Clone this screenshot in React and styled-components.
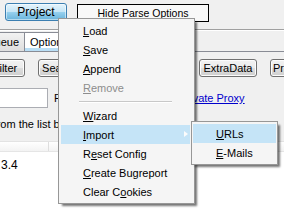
import React from 'react'
import styled, { createGlobalStyle } from 'styled-components'

const GlobalStyle = createGlobalStyle`
	html, body {
		margin: 0;
		padding: 0;
		background: #f0f0f0;
		overflow: hidden;
	}
	body {
		font-family: "Liberation Sans", Arial, sans-serif;
		font-size: 11px;
		color: #000;
	}
`

const Window = styled.div`
	position: relative;
	width: 284px;
	height: 210px;
	overflow: hidden;
	background: #f0f0f0;
`

const TopBar = styled.div`
	display: flex;
	align-items: flex-start;
	gap: 10px;
	height: 26px;
	padding: 3px 0 0 5px;
	border-bottom: 1px solid #a0a0a0;
	box-shadow: 0 1px 0 #fff;
`

const ProjectButton = styled.div`
	box-sizing: border-box;
	width: 62px;
	height: 18px;
	display: flex;
	align-items: center;
	justify-content: center;
	border: 1px solid #3c7fb1;
	border-radius: 3px;
	background: linear-gradient(#e5f4fc 0%, #c4e5f6 50%, #98d1ef 50%, #68b3db 100%);
	box-shadow: inset 0 0 0 1px rgba(255, 255, 255, 0.5);
	font-size: 12px;
`

const ToggleButton = styled.div`
	box-sizing: border-box;
	width: 132px;
	height: 18px;
	margin-top: 1px;
	display: flex;
	align-items: center;
	justify-content: center;
	border: 1px solid #000;
	background: #f8f8f8;
	font-size: 10.5px;
`

const TabStrip = styled.div`
	display: flex;
	height: 19px;
	margin-top: 2px;
	margin-left: -20px;
	border-bottom: 1px solid #898c95;
`

const Tab = styled.div`
	box-sizing: border-box;
	height: 19px;
	padding: 3px 5px 0;
	border: 1px solid #898c95;
	border-bottom: none;
	margin-right: -1px;
	background: ${p => (p.$active ? '#fff' : 'linear-gradient(#f2f2f2, #dedede)')};
	box-shadow: ${p => (p.$active ? 'inset 0 -3px 0 #b9def5' : 'none')};
`

const Page = styled.div`
	padding-top: 7px;
`

const ButtonRow = styled.div`
	display: flex;
	gap: 13px;
	margin-left: -15px;
`

const Button = styled.div`
	box-sizing: border-box;
	flex: none;
	width: ${p => p.$w}px;
	height: 18px;
	display: flex;
	align-items: center;
	justify-content: center;
	border: 1px solid #707070;
	border-radius: 3px;
	background: linear-gradient(#f2f2f2 0%, #ebebeb 50%, #dddddd 50%, #cfcfcf 100%);
	box-shadow: inset 0 0 0 1px #fcfcfc;
	white-space: nowrap;
`

const InputRow = styled.div`
	display: flex;
	align-items: center;
	margin-top: 11px;
	margin-left: -2px;
	height: 20px;
`

const TextInput = styled.div`
	box-sizing: border-box;
	width: 50px;
	height: 20px;
	background: #fff;
	border: 1px solid #abadb3;
`

const Label = styled.span`
	margin-left: ${p => p.$ml}px;
	white-space: nowrap;
`

const Link = styled.span`
	margin-left: ${p => p.$ml}px;
	color: #0000cc;
	text-decoration: underline;
	white-space: nowrap;
`

const Hint = styled.div`
	margin-top: 10px;
	margin-left: -40px;
	white-space: nowrap;
`

const List = styled.div`
	margin-top: 11px;
	height: 80px;
	background: #fff;
	border-top: 1px solid #e3e3e3;
`

const ListHeader = styled.div`
	display: flex;
	height: 9px;
	background: linear-gradient(#fff, #f3f3f3);
	border-bottom: 1px solid #e5e5e5;
`

const HeaderCell = styled.div`
	width: ${p => p.$w}px;
	border-right: 1px solid #dedede;
`

const ListRow = styled.div`
	height: 17px;
	padding: 6px 0 0 1px;
	font-size: 12px;
	white-space: nowrap;
`

const Menu = styled.div`
	position: absolute;
	left: ${p => p.$x}px;
	top: ${p => p.$y}px;
	width: ${p => p.$w}px;
	box-sizing: border-box;
	padding: 2px ${p => p.$pr}px 2px ${p => p.$pl}px;
	background: #f5f5f5;
	border: 1px solid #979797;
	box-shadow: 3px 3px 2px -1px rgba(0, 0, 0, 0.55);
	font-size: 11px;
`

const Item = styled.div`
	position: relative;
	height: 19px;
	display: flex;
	align-items: center;
	padding-left: ${p => p.$indent}px;
	white-space: nowrap;
	color: ${p => (p.$disabled ? '#8d8d8d' : '#000')};
	background: ${p => (p.$hot ? '#c5e4f7' : 'transparent')};
`

const Key = styled.span`
	text-decoration: underline;
`

const Separator = styled.div`
	height: 1px;
	margin: 4px 18px 4px 18px;
	background: #c8c8c8;
	box-shadow: 0 1px 0 #fff;
`

const Arrow = styled.span`
	position: absolute;
	right: 2px;
	top: 6px;
	width: 0;
	height: 0;
	border-top: 3.5px solid transparent;
	border-bottom: 3.5px solid transparent;
	border-left: 4px solid #fcfcfc;
`

const label = (text, i) => (
	<>
		{text.slice(0, i)}
		<Key>{text[i]}</Key>
		{text.slice(i + 1)}
	</>
)

export default function App () {
	return (
		<Window>
			<GlobalStyle />
			<TopBar>
				<ProjectButton>Project</ProjectButton>
				<ToggleButton>Hide Parse Options</ToggleButton>
			</TopBar>
			<TabStrip>
				<Tab>Queue</Tab>
				<Tab $active>Options</Tab>
			</TabStrip>
			<Page>
				<ButtonRow>
					<Button $w={40}>Filter</Button>
					<Button $w={43}>Search</Button>
					<Button $w={92}>Sort</Button>
					<Button $w={58}>ExtraData</Button>
					<Button $w={34}>Proxy</Button>
				</ButtonRow>
				<InputRow>
					<TextInput />
					<Label $ml={6}>Port</Label>
					<Link $ml={105}>Private Proxy</Link>
				</InputRow>
				<Hint>Select from the list below</Hint>
				<List>
					<ListHeader>
						<HeaderCell $w={48} />
						<HeaderCell $w={60} />
					</ListHeader>
					<ListRow>3.4</ListRow>
				</List>
			</Page>

			<Menu $x={58} $y={18} $w={137} $pl={2} $pr={4}>
				<Item $indent={22}>{label('Load', 0)}</Item>
				<Item $indent={22}>{label('Save', 0)}</Item>
				<Item $indent={22}>{label('Append', 0)}</Item>
				<Item $indent={22} $disabled>{label('Remove', 0)}</Item>
				<Separator />
				<Item $indent={22}>{label('Wizard', 0)}</Item>
				<Item $indent={22} $hot>
					{label('Import', 0)}
					<Arrow />
				</Item>
				<Item $indent={22}>{label('Reset Config', 1)}</Item>
				<Item $indent={22}>{label('Create Bugreport', 0)}</Item>
				<Item $indent={22}>{label('Clear Cookies', 7)}</Item>
			</Menu>

			<Menu $x={191} $y={121} $w={87} $pl={1} $pr={1}>
				<Item $indent={23} $hot>{label('URLs', 0)}</Item>
				<Item $indent={23}>{label('E-Mails', 0)}</Item>
			</Menu>
		</Window>
	)
}
